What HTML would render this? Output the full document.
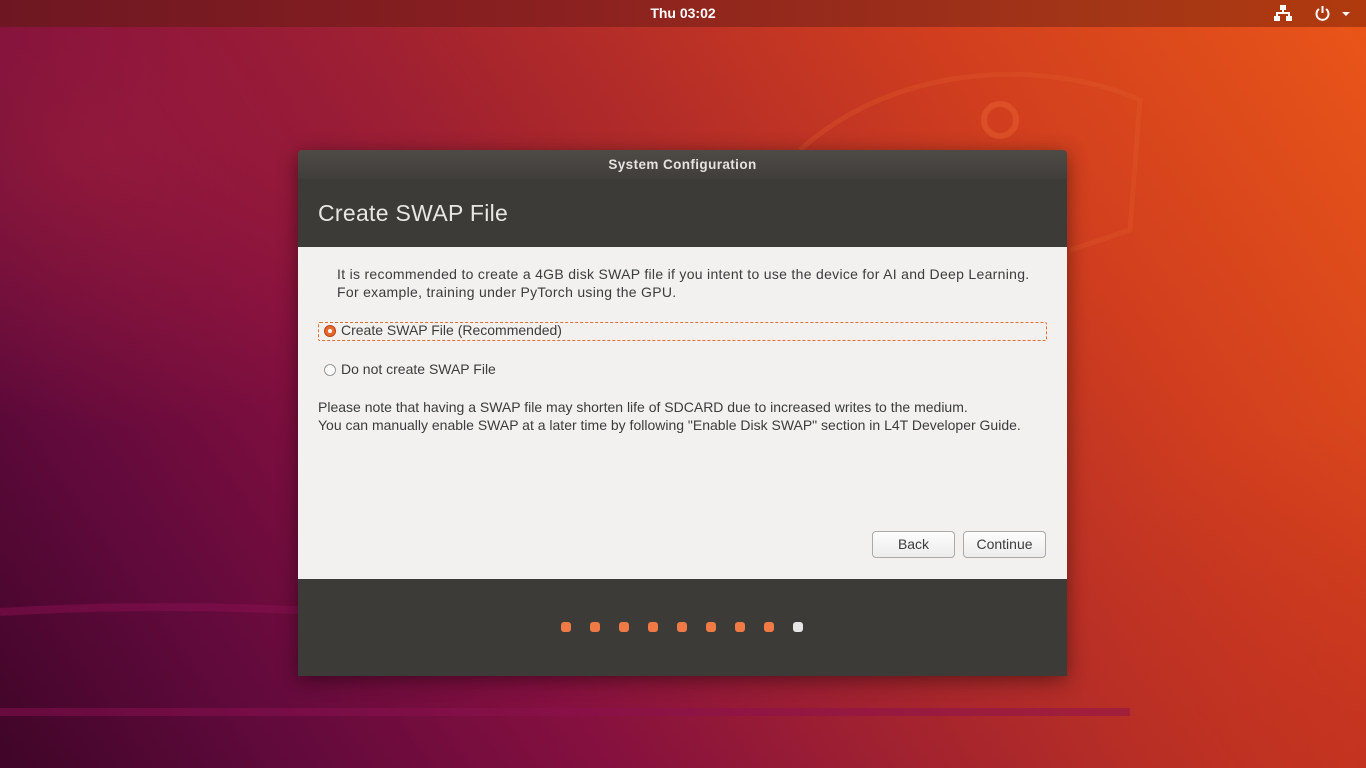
<!DOCTYPE html>
<html><head><meta charset="utf-8">
<style>
*{margin:0;padding:0;box-sizing:border-box}
body{width:1366px;height:768px;overflow:hidden;position:relative;font-family:"Liberation Sans",sans-serif;
background:linear-gradient(235deg,#ea5618 0%,#cf3d1f 25%,#a8262c 48%,#85103f 68%,#620a3c 84%,#3f0528 100%);}
.bg2{position:absolute;inset:0;background:radial-gradient(ellipse 500px 500px at 1366px 768px,rgba(190,45,30,.55),transparent 70%),radial-gradient(ellipse 600px 400px at 100px 150px,rgba(165,35,55,.5),transparent 70%);}
.top{position:absolute;left:0;top:0;width:1366px;height:27px;background:linear-gradient(90deg,#6e1722,#8a2020 40%,#a33517 80%,#b03a0e);color:#fff;font-weight:bold;font-size:14px;text-align:center;line-height:26px}
.dlg{position:absolute;left:298px;top:150px;width:769px;height:526px;box-shadow:0 4px 20px rgba(0,0,0,.45);border-radius:4px 4px 0 0;overflow:hidden}
.tb{height:30px;background:linear-gradient(#4e4b47,#403e3a);color:#e6e3df;font-weight:bold;font-size:13.5px;text-align:center;line-height:29px;letter-spacing:.4px}
.hd{height:68px;background:#3d3b37;color:#e8e6e2;font-size:23px;padding-left:20px;line-height:68px;margin-top:-1px;letter-spacing:.3px}
.ct{height:332px;background:#f2f1ef;position:relative;color:#3c3c3c;font-size:14px}
.ft{height:97px;background:#3d3b37;position:relative}
.t{position:absolute;white-space:nowrap;line-height:18px}
.radio{position:absolute;width:12px;height:12px;border-radius:50%;border:1px solid #999;background:#fff}
.sel{border:1px dashed #e07030;position:absolute;left:20px;top:74px;width:729px;height:19px;border-radius:2px}
.btn{position:absolute;top:284px;height:27px;border:1px solid #aaa;border-radius:4px;background:linear-gradient(#fdfdfd,#ececec);text-align:center;line-height:25px;color:#3c3c3c}
.dot{position:absolute;top:43px;width:10px;height:10px;border-radius:3px;background:#ef7a45}
</style></head><body>
<div class="bg2"></div>
<svg width="1366" height="768" style="position:absolute;left:0;top:0" fill="none">
<path d="M0 612 C200 600 400 610 600 640" stroke="#8a1050" stroke-width="8" opacity=".5"/>
<path d="M0 712 L1130 712" stroke="#8c1050" stroke-width="8" opacity=".5"/>
<path d="M800 150 C900 60 1050 60 1140 100 L1130 230 L1070 250" stroke="#e05a2a" stroke-width="5" opacity=".35"/>
<circle cx="1000" cy="120" r="16" stroke="#e86030" stroke-width="6" opacity=".5"/>
</svg>
<div class="top">Thu 03:02
<svg style="position:absolute;left:1274px;top:5px" width="18" height="17" fill="#fff"><rect x="6" y="0" width="6" height="5"/><rect x="8" y="5" width="2" height="3"/><rect x="2" y="7" width="14" height="2"/><rect x="2" y="7" width="2" height="4"/><rect x="14" y="7" width="2" height="4"/><rect x="0" y="11" width="6" height="5"/><rect x="12" y="11" width="6" height="5"/></svg>
<svg style="position:absolute;left:1314px;top:5px" width="40" height="17" fill="none" stroke="#fff" stroke-width="2"><path d="M5 4 A6 6 0 1 0 12 4"/><path d="M8.5 1 V8"/><path d="M28 7 L36 7 L32 11 Z" fill="#fff" stroke="none"/></svg>
</div>
<div class="dlg">
<div class="tb">System Configuration</div>
<div class="hd">Create SWAP File</div>
<div class="ct">
<div class="t" style="left:39px;top:18px;letter-spacing:.3px">It is recommended to create a 4GB disk SWAP file if you intent to use the device for AI and Deep Learning.<br>For example, training under PyTorch using the GPU.</div>
<div class="sel" style="top:75px"></div>
<div class="radio" style="left:26px;top:78px;border-color:#c04010;background:#e5682f"><div style="position:absolute;left:3px;top:3px;width:4px;height:4px;border-radius:50%;background:#fff"></div></div>
<div class="t" style="left:43px;top:74px">Create SWAP File (Recommended)</div>
<div class="radio" style="left:26px;top:117px"></div>
<div class="t" style="left:43px;top:113px">Do not create SWAP File</div>
<div class="t" style="left:20px;top:151px">Please note that having a SWAP file may shorten life of SDCARD due to increased writes to the medium.<br>You can manually enable SWAP at a later time by following "Enable Disk SWAP" section in L4T Developer Guide.</div>
<div class="btn" style="left:574px;width:83px;top:284px">Back</div>
<div class="btn" style="left:665px;width:83px;top:284px">Continue</div>
</div>
<div class="ft">
<div class="dot" style="left:263px"></div><div class="dot" style="left:292px"></div><div class="dot" style="left:321px"></div><div class="dot" style="left:350px"></div><div class="dot" style="left:379px"></div><div class="dot" style="left:408px"></div><div class="dot" style="left:437px"></div><div class="dot" style="left:466px"></div><div class="dot" style="left:495px;background:#e6e6e6"></div>
</div>
</div>
</body></html>
